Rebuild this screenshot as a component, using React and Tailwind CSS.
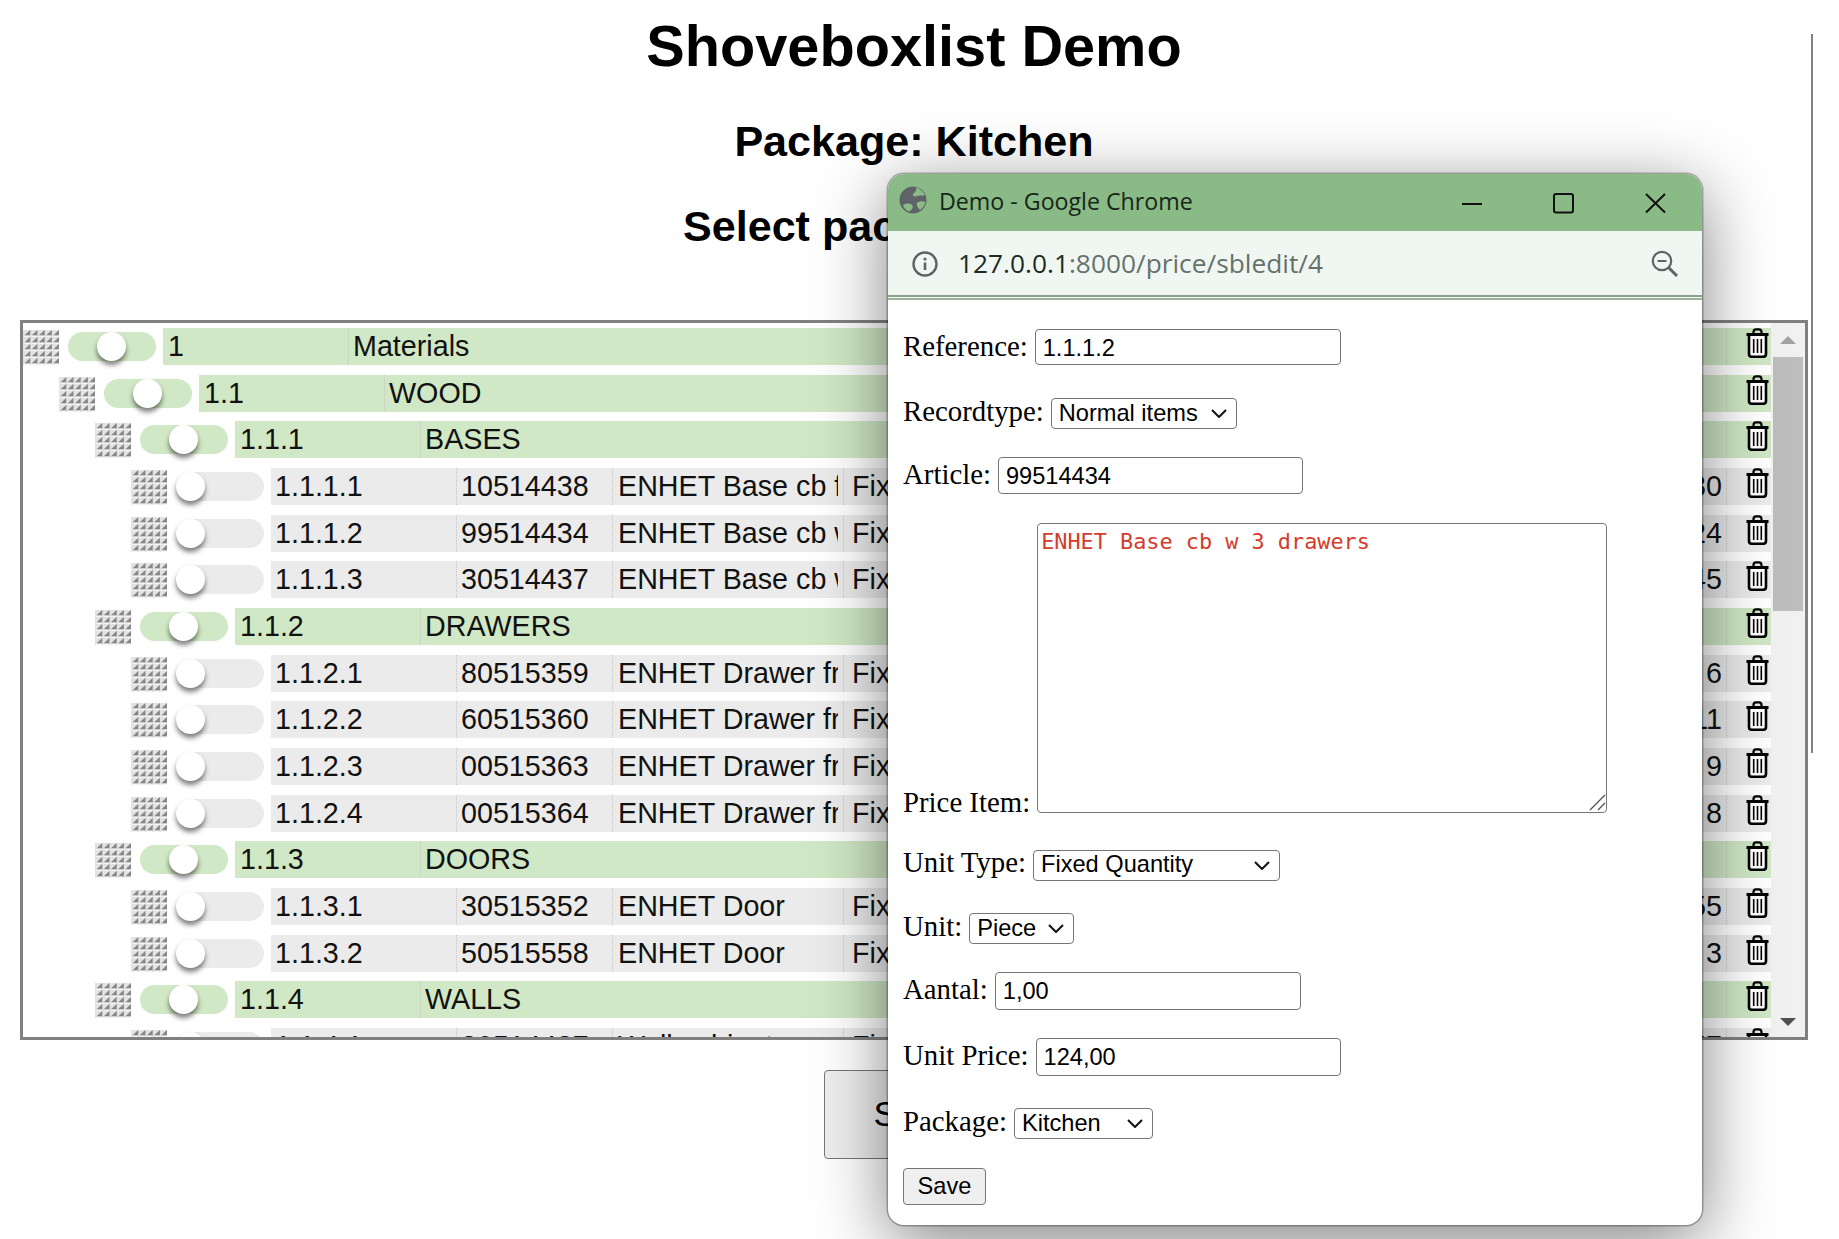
const sans = "font-['Liberation_Sans',Arial,sans-serif]";

const rows = [
  { ref: "1", level: 0, name: "Materials" },
  { ref: "1.1", level: 1, name: "WOOD" },
  { ref: "1.1.1", level: 2, name: "BASES" },
  { ref: "1.1.1.1", article: "10514438", name: "ENHET Base cb f 2 doors", value: "130" },
  { ref: "1.1.1.2", article: "99514434", name: "ENHET Base cb w 3 drawers", value: "124" },
  { ref: "1.1.1.3", article: "30514437", name: "ENHET Base cb w 2 drawers", value: "145" },
  { ref: "1.1.2", level: 2, name: "DRAWERS" },
  { ref: "1.1.2.1", article: "80515359", name: "ENHET Drawer front", value: "6" },
  { ref: "1.1.2.2", article: "60515360", name: "ENHET Drawer front", value: "11" },
  { ref: "1.1.2.3", article: "00515363", name: "ENHET Drawer front", value: "9" },
  { ref: "1.1.2.4", article: "00515364", name: "ENHET Drawer front", value: "8" },
  { ref: "1.1.3", level: 2, name: "DOORS" },
  { ref: "1.1.3.1", article: "30515352", name: "ENHET Door", value: "55" },
  { ref: "1.1.3.2", article: "50515558", name: "ENHET Door", value: "3" },
  { ref: "1.1.4", level: 2, name: "WALLS" },
  { ref: "1.1.4.1", article: "30514437", name: "Wall cabinet", value: "57" },
];

function DragHandle() {
  const cells = [0, 1, 2, 3, 4];
  return (
    <svg width="36" height="35" viewBox="0 0 36 35" className="mt-[2px] shrink-0">
      <rect width="36" height="35" fill="#e2e2e2" />
      {cells.map((r) =>
        cells.map((c) => (
          <g key={`${r}-${c}`} transform={`translate(${c * 7.2} ${r * 7})`}>
            <polygon points="0,7 7.2,0 7.2,7" fill="#c2c2c2" />
            <polygon points="1.5,5.6 7.2,0 7.2,5.6" fill="#868686" />
            <polygon points="0,7 1.5,5.6 7.2,5.6 7.2,7" fill="#f4f4f4" />
          </g>
        ))
      )}
    </svg>
  );
}

function Toggle({ on }) {
  return (
    <div
      className={`ml-[9px] mt-[4px] flex h-[29px] w-[88px] shrink-0 rounded-full ${
        on ? "justify-center bg-[#d0e8c5] pr-[1px]" : "justify-start bg-[#ebebeb]"
      }`}
    >
      <div className="h-[29px] w-[29px] rounded-full bg-white shadow-[0_4px_5px_rgba(0,0,0,0.5)]" />
    </div>
  );
}

function Trash() {
  return (
    <svg width="23" height="30" viewBox="0 0 23 30" fill="none" stroke="#000" className="block">
      <path d="M7.5 6V4Q7.5 1.3 10 1.3H13Q15.5 1.3 15.5 4V6" strokeWidth="2.2" />
      <path d="M3 8V26Q3 28.8 6 28.8H17Q20 28.8 20 26V8" strokeWidth="2.6" fill="#fff" />
      <path d="M0.5 6.5H22.5" strokeWidth="3" />
      <path d="M7.7 11V25M11.5 11V25M15.3 11V25" strokeWidth="1.6" />
    </svg>
  );
}

function TreeRow({ row }) {
  const isGroup = row.article === undefined;
  const level = isGroup ? row.level : 3;
  const divider = "border-l border-dotted border-[#c4c4c4]";
  return (
    <div className="mb-[9.67px] flex h-[37px]">
      <div className="shrink-0" style={{ width: level * 36 }} />
      <DragHandle />
      <Toggle on={isGroup} />
      <div
        className={`ml-[7px] flex h-[37px] flex-1 leading-[36px] text-[#111] ${
          isGroup ? "bg-[#d0e8c5]" : "bg-[#ebebeb]"
        }`}
      >
        <div className={`w-[185px] shrink-0 ${isGroup ? "pl-[5px]" : "pl-[4px]"}`}>{row.ref}</div>
        {isGroup ? (
          <div className={`flex-1 pl-[4px] ${divider}`}>{row.name}</div>
        ) : (
          <>
            <div className={`w-[156px] shrink-0 pl-[4px] ${divider}`}>{row.article}</div>
            <div className={`w-[231px] shrink-0 pl-[5px] pr-[5px] ${divider}`}>
              <div className="overflow-hidden whitespace-nowrap">{row.name}</div>
            </div>
            <div className={`flex-1 pl-[8px] ${divider}`}>Fixed Quantity</div>
            <div className="w-[60px] shrink-0 pr-[4px] text-right">{row.value}</div>
          </>
        )}
        <div className={`flex w-[45px] shrink-0 justify-end pr-[2px] ${divider}`}>
          <Trash />
        </div>
      </div>
    </div>
  );
}

function Scrollbar() {
  return (
    <div className="flex w-[34px] shrink-0 flex-col bg-[#f1f1f1]">
      <div className="flex h-[34px] items-center justify-center">
        <div className="h-0 w-0 border-x-[8px] border-b-[8px] border-x-transparent border-b-[#a3a3a3]" />
      </div>
      <div className="mx-[2px] h-[254px] bg-[#bdbdbd]" />
      <div className="flex-1" />
      <div className="flex h-[34px] items-center justify-center pt-[3px]">
        <div className="h-0 w-0 border-x-[8px] border-t-[8px] border-x-transparent border-t-[#505050]" />
      </div>
    </div>
  );
}

const fieldClass = `rounded-[4px] border-[1.5px] border-[#767676] bg-white text-[23.6px] text-black ${sans}`;

function Field({ label, value, width, height = 37, top }) {
  return (
    <div className="flex items-baseline gap-[7px]" style={{ marginTop: top }}>
      <label className="leading-none">{label}</label>
      <input
        defaultValue={value}
        className={`${fieldClass} pl-[7px] pt-[2px]`}
        style={{ width, height }}
      />
    </div>
  );
}

function Select({ label, value, width, top, gap = 7 }) {
  return (
    <div className="flex items-baseline" style={{ marginTop: top, gap }}>
      <label className="leading-none">{label}</label>
      <div className="relative" style={{ width }}>
        <select
          defaultValue={value}
          className={`${fieldClass} block h-[31px] w-full appearance-none pl-[7px] leading-none`}
        >
          <option>{value}</option>
        </select>
        <svg
          width="16"
          height="9"
          viewBox="0 0 16 9"
          fill="none"
          stroke="#111"
          strokeWidth="2"
          className="pointer-events-none absolute right-[10px] top-[11px]"
        >
          <path d="M1 1L8 8L15 1" />
        </svg>
      </div>
    </div>
  );
}

function Popup() {
  return (
    <div className="absolute left-[888px] top-[174px] flex h-[1051px] w-[814px] flex-col overflow-hidden rounded-[16px] bg-white shadow-[0_0_0_1.5px_rgba(0,0,0,0.28),0_16px_70px_rgba(0,0,0,0.5)]">
      <div className="flex h-[57px] shrink-0 items-center bg-[#8aba85]">
        <svg width="28" height="28" viewBox="0 0 28 28" className="ml-[11px] mt-[-5px]">
          <circle cx="14" cy="14" r="13.5" fill="#5f6368" />
          <path
            d="M14 8C17 6 18 3 17 1.5C20 2 24 5 26 9C23 10 21 9 19 10C16 11 13 10 14 8ZM4 19C7 17 11 17 13 19C15 21 13 24 10 25.5C7 24.5 5 22 4 19ZM18 17C20 15 24 15 26.5 16C26 19 24 22 21 24C19 22 17 19 18 17Z"
            fill="#8aba85"
          />
        </svg>
        <span className="ml-[12px] mt-[-3px] font-['Open_Sans',sans-serif] text-[23.2px] text-[#17261a]">
          Demo - Google Chrome
        </span>
        <div className="flex-1" />
        <svg width="222" height="24" viewBox="0 0 222 24" fill="none" stroke="#111" strokeWidth="2" className="mr-[18px]">
          <path d="M0 13H20" />
          <rect x="92" y="3" width="19" height="18.5" rx="2" />
          <path d="M184 3L203 21.5M203 3L184 21.5" />
        </svg>
      </div>
      <div className="flex h-[64px] shrink-0 items-center bg-[#f0f7f2] pt-[2px]">
        <svg width="26" height="26" viewBox="0 0 26 26" fill="none" className="ml-[24px]">
          <circle cx="13" cy="13" r="11.5" stroke="#5f6368" strokeWidth="2.4" />
          <path d="M13 11.5V19" stroke="#5f6368" strokeWidth="2.6" />
          <circle cx="13" cy="8" r="1.6" fill="#5f6368" />
        </svg>
        <span className="ml-[20px] font-['Open_Sans',sans-serif] text-[26.3px] text-[#1f2a24]">
          127.0.0.1<span className="text-[#66716c]">:8000/price/sbledit/4</span>
        </span>
        <div className="flex-1" />
        <svg width="28" height="28" viewBox="0 0 28 28" fill="none" stroke="#5f6368" className="mr-[23px]">
          <circle cx="11" cy="11" r="9.2" strokeWidth="2.2" />
          <path d="M6.5 11H15.5" strokeWidth="2" />
          <path d="M17.5 17.5L26 26" strokeWidth="3" />
        </svg>
      </div>
      <div className="h-[2px] shrink-0 bg-[#8ba38b]" />
      <div className="h-[1px] shrink-0 bg-[#f0f7f2]" />
      <div className="h-[2px] shrink-0 bg-[#9db39d]" />
      <form className="flex flex-1 flex-col pl-[15px] font-['Liberation_Serif','Times_New_Roman',serif] text-[28.8px] text-black">
        <Field label="Reference:" value="1.1.1.2" width={306} height={36} top={29} />
        <Select label="Recordtype:" value="Normal items" width={186} top={32} />
        <Field label="Article:" value="99514434" width={305} top={28} />
        <div className="mt-[29px] flex items-end gap-[7px]">
          <label className="mb-[-3px] leading-none">Price Item:</label>
          <div className="relative h-[290px] w-[570px]">
            <textarea
              defaultValue="ENHET Base cb w 3 drawers"
              className="block h-full w-full resize-none rounded-[4px] border-[1.5px] border-[#767676] px-[3px] py-[5px] font-['DejaVu_Sans_Mono',monospace] text-[21.85px] leading-[26px] text-[#d33c2c]"
            />
            <svg width="18" height="18" viewBox="0 0 18 18" stroke="#555" strokeWidth="1.4" className="pointer-events-none absolute bottom-[2px] right-[1px]">
              <path d="M2 17L17 2M10 17L17 10" />
            </svg>
          </div>
        </div>
        <Select label="Unit Type:" value="Fixed Quantity" width={247} top={35} />
        <Select label="Unit:" value="Piece" width={105} top={31} />
        <Field label="Aantal:" value="1,00" width={306} height={38} top={28} />
        <Field label="Unit Price:" value="124,00" width={305} height={38} top={28} />
        <Select label="Package:" value="Kitchen" width={139} top={31} />
        <div className="mt-[24px]">
          <button
            type="button"
            className={`h-[37px] w-[83px] rounded-[4px] border-[1.5px] border-[#767676] bg-[#efefef] text-[23.6px] text-black ${sans}`}
          >
            Save
          </button>
        </div>
      </form>
    </div>
  );
}

export default function App() {
  return (
    <div className={`relative flex h-[1239px] overflow-hidden bg-white ${sans}`}>
      <div className="ml-[20px] w-[1788px] shrink-0">
        <h1 className="text-center text-[57.7px] font-bold leading-[92px] text-black">Shoveboxlist Demo</h1>
        <h2 className="mt-[24px] text-center text-[43.1px] font-bold leading-[50px] text-black">Package: Kitchen</h2>
        <h2 className="mt-[35px] pl-[5px] text-center text-[43.1px] font-bold leading-[50px] text-black">
          Select package to edit:
        </h2>
        <div className="mt-[69px] flex h-[720px] overflow-hidden border-[3px] border-[#808080] text-[28.7px]">
          <div className="flex-1 overflow-hidden pt-[5px]">
            {rows.map((row) => (
              <TreeRow key={row.ref} row={row} />
            ))}
          </div>
          <Scrollbar />
        </div>
        <div className="mt-[30px] flex justify-center">
          <button
            type="button"
            className="h-[89px] w-[180px] rounded-[4px] border-[1.5px] border-[#767676] bg-[#efefef] text-[35.5px] text-black"
          >
            Save
          </button>
        </div>
      </div>
      <div className="ml-[3px] mt-[34px] h-[719px] w-[1.5px] bg-[#808080]" />
      <Popup />
    </div>
  );
}
